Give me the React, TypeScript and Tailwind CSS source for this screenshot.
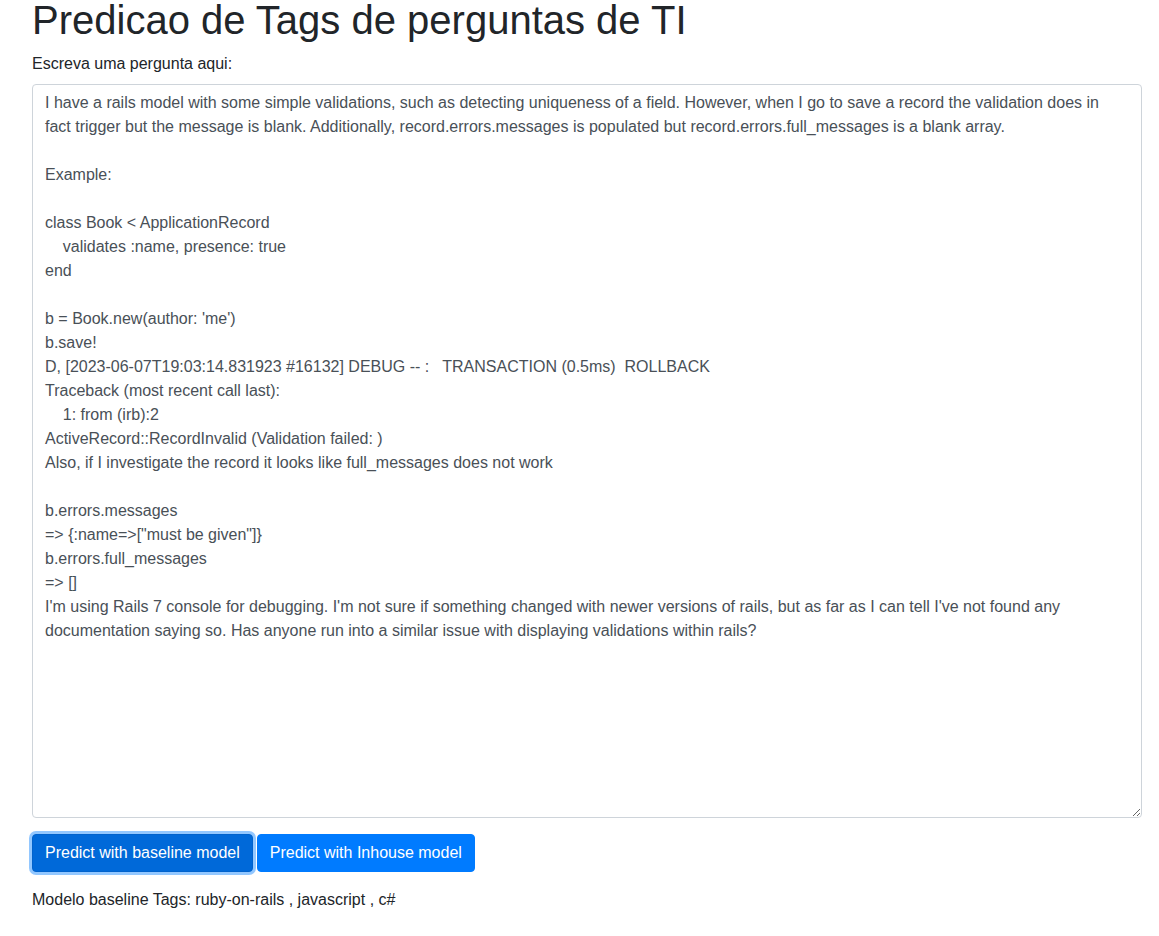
import React, { useState } from 'react';

const QUESTION = `I have a rails model with some simple validations, such as detecting uniqueness of a field. However, when I go to save a record the validation does in fact trigger but the message is blank. Additionally, record.errors.messages is populated but record.errors.full_messages is a blank array.

Example:

class Book < ApplicationRecord
    validates :name, presence: true
end

b = Book.new(author: 'me')
b.save!
D, [2023-06-07T19:03:14.831923 #16132] DEBUG -- :   TRANSACTION (0.5ms)  ROLLBACK
Traceback (most recent call last):
    1: from (irb):2
ActiveRecord::RecordInvalid (Validation failed: )
Also, if I investigate the record it looks like full_messages does not work

b.errors.messages
=> {:name=>["must be given"]}
b.errors.full_messages
=> []
I'm using Rails 7 console for debugging. I'm not sure if something changed with newer versions of rails, but as far as I can tell I've not found any documentation saying so. Has anyone run into a similar issue with displaying validations within rails?`;

export default function App() {
  const [question, setQuestion] = useState(QUESTION);

  return (
    <div className="min-h-[936px] bg-white text-[#212529] font-['Liberation_Sans',Arial,sans-serif] pl-[32px] pr-[17px]">
      <h1 className="text-[40px] leading-[40px] font-medium mb-3">Predicao de Tags de perguntas de TI</h1>

      <label className="block text-base leading-6 mb-2">Escreva uma pergunta aqui:</label>
      <textarea
        value={question}
        onChange={(e) => setQuestion(e.target.value)}
        className="block w-full h-[734px] px-3 py-1.5 text-base leading-6 text-[#495057] bg-white border border-[#ced4da] rounded-[4px] outline-none whitespace-pre-wrap font-['Liberation_Sans',Arial,sans-serif]"
      />

      <div className="flex gap-1 mt-4">
        <button className="px-3 py-1.5 text-base leading-6 text-white bg-[#0069d9] border border-[#0062cc] rounded-[4px] shadow-[0_0_0_3px_rgba(38,143,255,0.5)]">
          Predict with baseline model
        </button>
        <button className="px-3 py-1.5 text-base leading-6 text-white bg-[#007bff] border border-[#007bff] rounded-[4px]">
          Predict with Inhouse model
        </button>
      </div>

      <p className="mt-4 text-base leading-6">Modelo baseline Tags: ruby-on-rails , javascript , c#</p>
    </div>
  );
}
